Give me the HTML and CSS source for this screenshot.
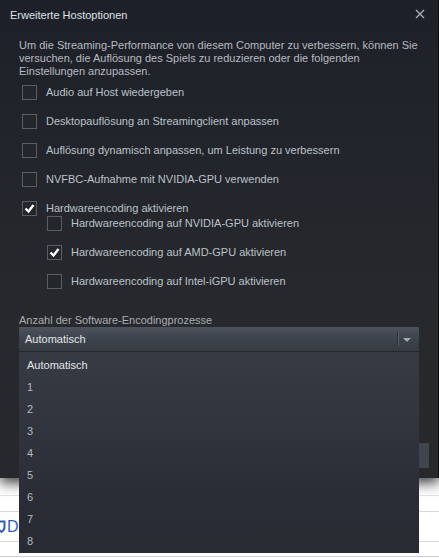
FILE: index.html
```html
<!DOCTYPE html>
<html>
<head>
<meta charset="utf-8">
<link rel="stylesheet" href="styles.css">
</head>
<body>
<div class="page">
  <div class="page-top"></div>
  <div class="page-row row-a"></div>
  <div class="page-row row-b">
    <svg class="page-icon" width="9" height="13" viewBox="0 0 9 13"><path d="M1.5 1.5 L7.5 1.5 L7.5 7 Q7.5 10 4.5 12 Q1.5 10 1.5 7 Z" fill="none" stroke="#2e5fb8" stroke-width="2"/></svg>
    <span class="page-link">Da</span>
  </div>
  <div class="page-row row-c"></div>
  <div class="page-row row-d"></div>
</div>

<div class="dialog">
  <div class="dialog-title">
    <span>Erweiterte Hostoptionen</span>
    <svg class="close" width="10" height="10" viewBox="0 0 10 10"><path d="M1 1 L9 9 M9 1 L1 9" stroke="#a9adb2" stroke-width="1.4"/></svg>
  </div>
  <div class="dialog-body">
    <p class="desc">Um die Streaming-Performance von diesem Computer zu verbessern, können Sie versuchen, die Auflösung des Spiels zu reduzieren oder die folgenden Einstellungen anzupassen.</p>
    <div class="options">
      <div class="opt"><span class="cb"></span><span class="lbl">Audio auf Host wiedergeben</span></div>
      <div class="opt"><span class="cb"></span><span class="lbl">Desktopauflösung an Streamingclient anpassen</span></div>
      <div class="opt"><span class="cb"></span><span class="lbl">Auflösung dynamisch anpassen, um Leistung zu verbessern</span></div>
      <div class="opt"><span class="cb"></span><span class="lbl">NVFBC-Aufnahme mit NVIDIA-GPU verwenden</span></div>
      <div class="group">
        <div class="opt"><span class="cb"><svg width="13" height="13" viewBox="0 0 13 13"><path d="M2.5 6.5 L5.5 9.5 L10.5 3" fill="none" stroke="#fff" stroke-width="2.4"/></svg></span><span class="lbl">Hardwareencoding aktivieren</span></div>
        <div class="sub">
          <div class="opt"><span class="cb"></span><span class="lbl">Hardwareencoding auf NVIDIA-GPU aktivieren</span></div>
          <div class="opt"><span class="cb"><svg width="13" height="13" viewBox="0 0 13 13"><path d="M2.5 6.5 L5.5 9.5 L10.5 3" fill="none" stroke="#fff" stroke-width="2.4"/></svg></span><span class="lbl">Hardwareencoding auf AMD-GPU aktivieren</span></div>
          <div class="opt"><span class="cb"></span><span class="lbl">Hardwareencoding auf Intel-iGPU aktivieren</span></div>
        </div>
      </div>
    </div>
    <div class="field-label">Anzahl der Software-Encodingprozesse</div>
    <div class="select">
      <span class="select-text">Automatisch</span>
      <span class="select-sep"></span>
      <span class="select-arrow"></span>
      <ul class="menu">
        <li class="first">Automatisch</li>
        <li>1</li>
        <li>2</li>
        <li>3</li>
        <li>4</li>
        <li>5</li>
        <li>6</li>
        <li>7</li>
        <li>8</li>
      </ul>
    </div>
  </div>
  <div class="scroll-thumb"></div>
</div>
</body>
</html>
```

FILE: styles.css
```css
html, body {
  margin: 0;
  padding: 0;
}
body {
  width: 439px;
  height: 558px;
  overflow: hidden;
  background: #ffffff;
  font-family: "Liberation Sans", Arial, sans-serif;
  position: relative;
}

/* background page */
.page-top { height: 495px; }
.page-row { border-top: 1px solid #d9d9d9; box-sizing: border-box; }
.row-a { height: 16px; border-top-color: #e2e2e2; }
.row-b {
  height: 30px;
  display: flex;
  align-items: center;
  gap: 0;
  margin-left: -3px;
}
.row-c { height: 15px; }
.row-d { height: 2px; border-top-color: #cfcfcf; }
.page-link {
  color: #2e5fb8;
  font-size: 16px;
  line-height: 20px;
  margin-left: 1px;
}

/* dialog */
.dialog {
  position: absolute;
  top: 0;
  left: 0;
  width: 439px;
  height: 478px;
  box-sizing: border-box;
  border-right: 1px solid #0c0d0f;
  background: linear-gradient(180deg, #1d2028 0px, #22252b 160px, #27292d 330px, #26282c 100%);
  box-shadow: 0 5px 12px rgba(0, 0, 0, 0.75);
  color: #b9bdc2;
}
.dialog-title {
  height: 31px;
  box-sizing: border-box;
  padding: 0 10px;
  display: flex;
  align-items: center;
  justify-content: space-between;
  font-size: 11px;
  color: #dfe2e6;
  padding-bottom: 2px;
}
.close { margin-right: 3px; margin-top: -1px; }

.dialog-body {
  padding: 8px 19px 0 19px;
  position: relative;
}
.desc {
  margin: 0;
  font-size: 11px;
  line-height: 13px;
  color: #b7bbc0;
}
.options {
  margin-top: 7px;
  padding-left: 3px;
  display: flex;
  flex-direction: column;
  gap: 14px;
}
.group, .sub {
  display: flex;
  flex-direction: column;
  gap: 14px;
}
.group { gap: 0; }
.sub { padding-left: 25px; }
.opt {
  height: 15px;
  display: flex;
  align-items: center;
  gap: 9px;
}
.cb {
  width: 15px;
  height: 15px;
  box-sizing: border-box;
  border: 1px solid #5a5d63;
  background: #23262b;
  flex: none;
  display: flex;
  align-items: center;
  justify-content: center;
}
.cb svg { display: block; }
.lbl {
  font-size: 11px;
  line-height: 15px;
  color: #bcc2c9;
  white-space: nowrap;
}

.field-label {
  margin-top: 24px;
  font-size: 11px;
  line-height: 14px;
  color: #a9adb2;
}
.select {
  position: relative;
  height: 24px;
  width: 400px;
  box-sizing: border-box;
  background: linear-gradient(180deg, #4c535d 0%, #3d434c 50%, #363b43 100%);
  display: flex;
  align-items: center;
  padding-left: 6px;
}
.select-text {
  flex: 1;
  font-size: 11px;
  color: #e4e6e8;
}
.select-sep {
  width: 1px;
  height: 14px;
  background: #2c3037;
  box-shadow: 1px 0 0 #555c66;
  margin-right: 5px;
}
.select-arrow {
  width: 0;
  height: 0;
  border-left: 4px solid transparent;
  border-right: 4px solid transparent;
  border-top: 4px solid #a6abb1;
  margin-right: 8px;
  margin-top: 1px;
}
.menu {
  position: absolute;
  top: 24px;
  left: 0;
  width: 400px;
  height: 202px;
  margin: 0;
  padding: 2px 0 2px 0;
  box-sizing: border-box;
  list-style: none;
  background: linear-gradient(180deg, #363b44 0%, #30343c 40%, #2a2d35 70%, #292b33 100%);
  border-top: 1px solid #23262b;
  z-index: 2;
}
.menu li {
  height: 22px;
  line-height: 22px;
  padding-left: 8px;
  font-size: 11px;
  color: #b3b9c0;
}
.menu li.first { color: #e3e6e9; }

.scroll-thumb {
  position: absolute;
  left: 419px;
  top: 443px;
  width: 10px;
  height: 25px;
  background: #3f454d;
}
```
